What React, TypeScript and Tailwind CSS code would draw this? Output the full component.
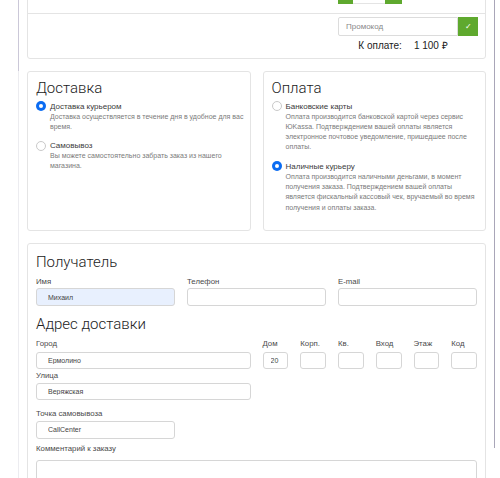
import React from "react";

function Radio({ checked }: { checked?: boolean }) {
  if (checked) {
    return (
      <span className="flex h-[10px] w-[10px] shrink-0 items-center justify-center rounded-full bg-[#0b6cf2]">
        <span className="h-[4px] w-[4px] rounded-full bg-white" />
      </span>
    );
  }
  return <span className="h-[10px] w-[10px] shrink-0 rounded-full border border-[#c9c9c9] bg-white" />;
}

function Option({ checked, title, lines }: { checked?: boolean; title: string; lines: string[] }) {
  return (
    <div className="flex gap-[4px]">
      <div className="flex h-[11px] items-center">
        <Radio checked={checked} />
      </div>
      <div>
        <div className="whitespace-nowrap text-[8px] leading-[11px] text-[#3a3a3a]">{title}</div>
        <div className="text-[7px] leading-[10.3px] text-[#7a7a7a]">
          {lines.map((l, i) => (
            <div key={i} className="whitespace-nowrap">
              {l}
            </div>
          ))}
        </div>
      </div>
    </div>
  );
}

function Heading({ children }: { children: React.ReactNode }) {
  return <div className="font-['Roboto',sans-serif] text-[15px] font-light leading-[17px] text-[#222]">{children}</div>;
}

function Label({ children }: { children: React.ReactNode }) {
  return <div className="whitespace-nowrap text-[7.8px] leading-[10px] text-[#4a4a4a]">{children}</div>;
}

function Field({ value, blue, small }: { value?: string; blue?: boolean; small?: boolean }) {
  return (
    <input
      readOnly
      defaultValue={value}
      className={
        "block h-[17.5px] w-full rounded-[3px] border border-[#d6d6d6] text-[7px] text-[#444] outline-none " +
        (small ? "px-[7px] " : "px-[11px] ") +
        (blue ? "bg-[#e8f0fe]" : "bg-white")
      }
    />
  );
}

export default function App() {
  return (
    <div className="h-[478px] w-[500px] overflow-hidden bg-white font-['Liberation_Sans',Arial,sans-serif]">
      <div className="ml-[18px] h-full w-[477px] border-r border-[#a9a6b8]">
        {/* top block */}
        <div className="border-l-[1.5px] border-[#cbc8d8] pl-[7.5px] pr-[8px] pb-[12px]">
          <div className="-mt-[30px] rounded-[3px] border border-[#e4e4e4] bg-white">
            <div className="flex h-[42px] items-end justify-end pb-[9px] pr-[83px]">
              <div className="flex h-[20px]">
                <div className="w-[15px] bg-[#5fa92e]" />
                <div className="w-[32px] border-b border-[#e4e4e4] bg-white" />
                <div className="w-[17px] bg-[#5fa92e]" />
              </div>
            </div>
            <div className="flex justify-end border-t border-[#e4e4e4] pb-[6px] pr-[7px] pt-[3px]">
              <div className="flex w-[140px] flex-col">
                <div className="flex h-[19px]">
                  <div className="flex flex-1 items-center rounded-l-[2px] border border-[#dcdcdc] pl-[7px] text-[8px] text-[#888]">
                    Промокод
                  </div>
                  <div className="flex w-[20px] items-center justify-center bg-[#5fa92e] text-[8px] text-white">✓</div>
                </div>
                <div className="mt-[4px] whitespace-nowrap pr-[10px] text-center text-[10px] leading-[12px] text-[#222]">
                  К оплате:<span className="ml-[12px]">1 100 ₽</span>
                </div>
              </div>
            </div>
          </div>
        </div>

        {/* lower block */}
        <div className="h-full border-l border-[#ececf0] pl-[8px] pr-[8px]">
          <div className="grid grid-cols-2 gap-[12px]">
            <div className="h-[160px] rounded-[3px] border border-[#e4e4e4] px-[8px] pt-[8px]">
              <Heading>Доставка</Heading>
              <div className="mt-[3.5px] flex flex-col gap-[8px]">
                <Option
                  checked
                  title="Доставка курьером"
                  lines={["Доставка осуществляется в течение дня в удобное для вас", "время."]}
                />
                <Option title="Самовывоз" lines={["Вы можете самостоятельно забрать заказ из нашего", "магазина."]} />
              </div>
            </div>
            <div className="h-[160px] rounded-[3px] border border-[#e4e4e4] px-[8px] pt-[8px]">
              <Heading>Оплата</Heading>
              <div className="mt-[3.5px] flex flex-col gap-[8px]">
                <Option
                  title="Банковские карты"
                  lines={[
                    "Оплата производится банковской картой через сервис",
                    "ЮKassa. Подтверждением вашей оплаты является",
                    "электронное почтовое уведомление, пришедшее после",
                    "оплаты.",
                  ]}
                />
                <Option
                  checked
                  title="Наличные курьеру"
                  lines={[
                    "Оплата производится наличными деньгами, в момент",
                    "получения заказа. Подтверждением вашей оплаты",
                    "является фискальный кассовый чек, вручаемый во время",
                    "получения и оплаты заказа.",
                  ]}
                />
              </div>
            </div>
          </div>

          <div className="mt-[12px] rounded-[3px] border border-[#e4e4e4] pl-[8px] pr-[8px] pt-[9.7px] pb-[20px]">
            <Heading>Получатель</Heading>
            <div className="mt-[6px] grid grid-cols-3 gap-x-[12px]">
              {[
                ["Имя", "Михаил", true],
                ["Телефон", "", false],
                ["E-mail", "", false],
              ].map(([l, v, b]) => (
                <div key={l as string}>
                  <Label>{l as string}</Label>
                  <div className="mt-[1.6px]">
                    <Field value={v as string} blue={b as boolean} />
                  </div>
                </div>
              ))}
            </div>

            <div className="mt-[10.6px]">
              <Heading>Адрес доставки</Heading>
            </div>
            <div className="mt-[6px] grid grid-cols-2 gap-x-[12px]">
              <div>
                <Label>Город</Label>
                <div className="mt-[2.4px]">
                  <Field value="Ермолино" />
                </div>
              </div>
              <div className="grid grid-cols-6 gap-x-[12px]">
                {[
                  ["Дом", "20"],
                  ["Корп.", ""],
                  ["Кв.", ""],
                  ["Вход", ""],
                  ["Этаж", ""],
                  ["Код", ""],
                ].map(([l, v]) => (
                  <div key={l}>
                    <Label>{l}</Label>
                    <div className="mt-[2.4px]">
                      <Field value={v} small />
                    </div>
                  </div>
                ))}
              </div>
            </div>

            <div className="mt-[2px] w-[215px]">
              <Label>Улица</Label>
              <div className="mt-[1.7px]">
                <Field value="Веряжская" />
              </div>
            </div>

            <div className="mt-[9px] w-[139px]">
              <Label>Точка самовывоза</Label>
              <div className="mt-[1.7px]">
                <Field value="CallCenter" />
              </div>
            </div>

            <div className="mt-[5.7px]">
              <Label>Комментарий к заказу</Label>
              <div className="mt-[5.3px] h-[60px] rounded-[3px] border border-[#d6d6d6]" />
            </div>
          </div>
        </div>
      </div>
    </div>
  );
}
